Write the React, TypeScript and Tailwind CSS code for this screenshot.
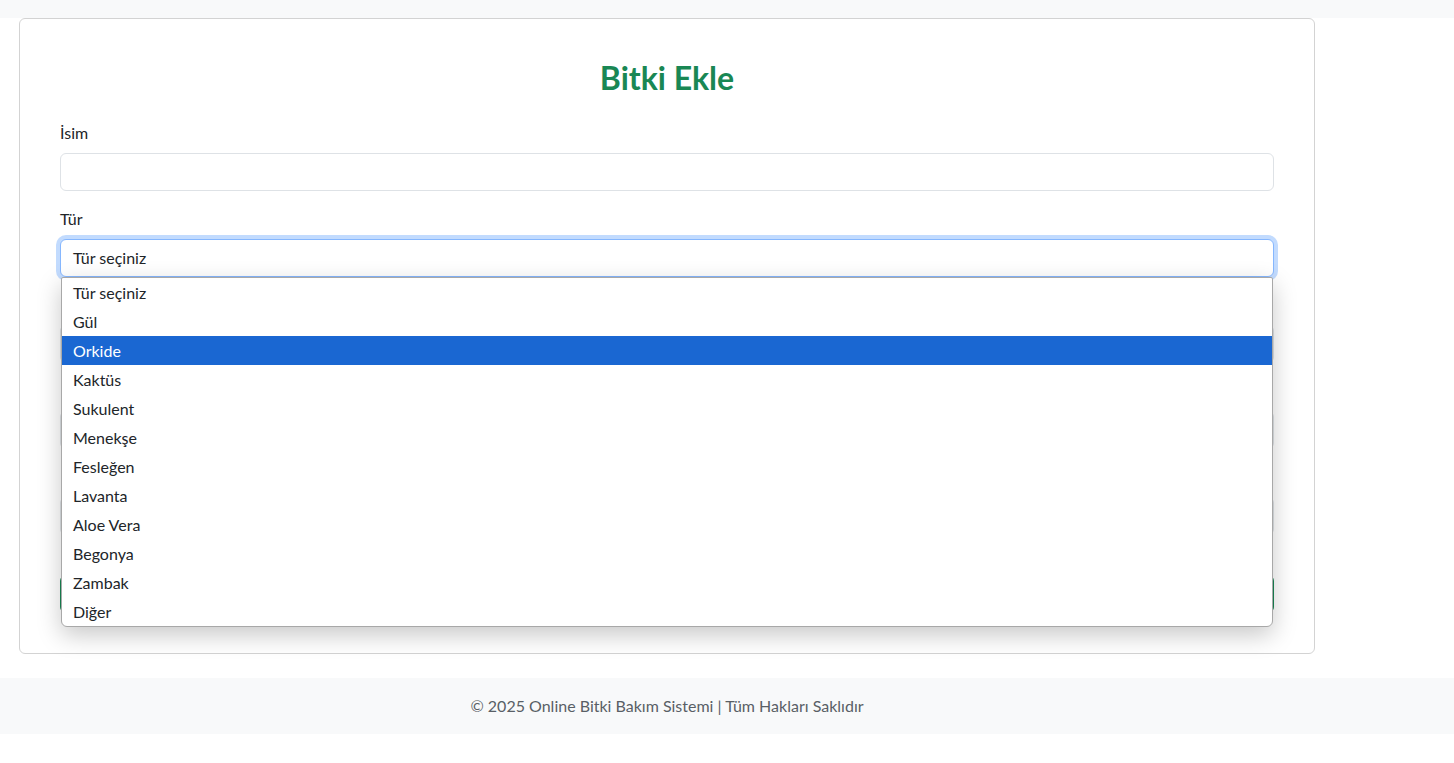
import React from "react";

const options = [
  "Tür seçiniz",
  "Gül",
  "Orkide",
  "Kaktüs",
  "Sukulent",
  "Menekşe",
  "Fesleğen",
  "Lavanta",
  "Aloe Vera",
  "Begonya",
  "Zambak",
  "Diğer",
];

export default function App() {
  const font = { fontFamily: 'Lato, "Noto Sans", sans-serif' };
  return (
    <div className="min-h-[763px] bg-white text-[#212529]" style={font}>
      <div className="h-[18px] bg-[#f8f9fa]" />
      <div className="ml-[19px] w-[1296px]">
        <div className="rounded-[6px] border border-[#d3d3d3] bg-white p-10">
          <h2 className="mb-6 text-center text-[32px] font-bold leading-[38px] text-[#198754]">
            Bitki Ekle
          </h2>
          <div className="mb-4">
            <label className="mb-2 block text-[16px] leading-6">İsim</label>
            <div className="h-[38px] rounded-[6px] border border-[#dee2e6] bg-white" />
          </div>
          <div className="relative mb-4">
            <label className="mb-2 block text-[16px] leading-6">Tür</label>
            <div className="flex h-[38px] items-center rounded-[6px] border border-[#86b7fe] bg-white px-3 text-[16px] shadow-[0_0_0_4px_rgba(13,110,253,0.25)]">
              Tür seçiniz
            </div>
            <div className="absolute left-[1px] right-[1px] top-[70px] z-10 overflow-hidden rounded-b-[6px] rounded-t-[2px] border border-[#a8a8a8] bg-white shadow-[0_8px_24px_rgba(0,0,0,0.22)]">
              {options.map((o, i) => (
                <div
                  key={o}
                  className={
                    "flex h-[29px] items-center px-[11px] text-[16px] " +
                    (i === 2 ? "bg-[#1a67d2] text-white" : "text-[#212529]")
                  }
                >
                  {o}
                </div>
              ))}
            </div>
          </div>
          <div className="flex flex-col gap-12 pt-8">
            <div className="h-[38px] rounded-[6px] border border-[#dee2e6] bg-white" />
            <div className="h-[38px] rounded-[6px] border border-[#dee2e6] bg-white" />
            <div className="h-[38px] rounded-[6px] border border-[#dee2e6] bg-white" />
          </div>
          <button className="mt-10 block h-[38px] w-full rounded-[6px] bg-[#198754] text-[16px] text-white">
            Kaydet
          </button>
        </div>
      </div>
      <footer className="mt-6 bg-[#f8f9fa] py-4">
        <div className="ml-[19px] w-[1296px] text-center text-[16px] leading-6 text-[#595f66]">
          © 2025 Online Bitki Bakım Sistemi | Tüm Hakları Saklıdır
        </div>
      </footer>
    </div>
  );
}
